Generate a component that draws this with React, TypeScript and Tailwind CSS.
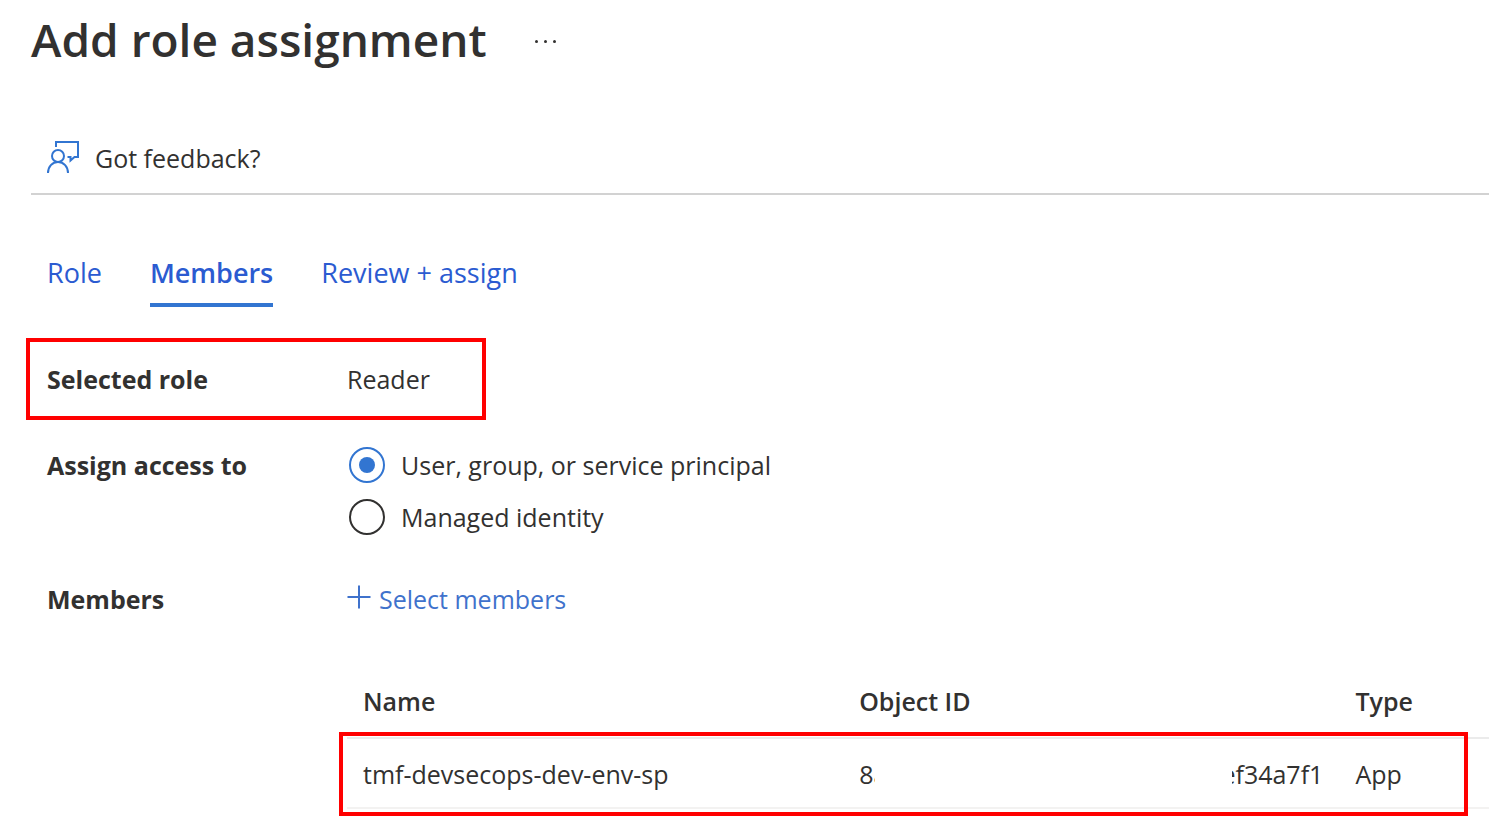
import { useState } from "react";

function FeedbackIcon() {
  return (
    <svg width="32" height="32" viewBox="0 0 32 32" fill="none" stroke="#3275d1" strokeWidth="2" className="shrink-0" aria-hidden="true">
      <path d="M9 6V1h22v15h-3.500l-4 3.500V16h-3" />
      <circle cx="11" cy="15" r="6" />
      <path d="M1 32c0-6.300 4.300-11 10-11s10 4.700 10 11" />
    </svg>
  );
}

function PlusIcon() {
  return (
    <svg width="24" height="24" viewBox="0 0 24 24" fill="none" stroke="#3f72cc" strokeWidth="2" className="shrink-0" aria-hidden="true">
      <path d="M0.500 12h23M12 0.500v23" />
    </svg>
  );
}

const tabs = ["Role", "Members", "Review + assign"];

const accessOptions = ["User, group, or service principal", "Managed identity"];

export default function App() {
  const [tab, setTab] = useState("Members");
  const [access, setAccess] = useState(accessOptions[0]);

  return (
    <main className="overflow-x-hidden bg-white pb-5 pl-[31px] font-['Open_Sans','Noto_Sans',sans-serif] text-[25px] leading-9 text-[#323130]">
      <header className="flex items-center gap-12 pt-[7px]">
        <h1 className="text-[46px] leading-16 font-semibold">Add role assignment</h1>
        <button type="button" aria-label="More actions" className="flex gap-1.5 pt-1">
          <span className="size-[3px] rounded-full bg-[#323130]" />
          <span className="size-[3px] rounded-full bg-[#323130]" />
          <span className="size-[3px] rounded-full bg-[#323130]" />
        </button>
      </header>

      <div className="mt-[69px] border-b-2 border-[#d2d2d2] pb-[17px] pl-4">
        <button type="button" className="flex items-center gap-4">
          <span className="pb-0.5">
            <FeedbackIcon />
          </span>
          Got feedback?
        </button>
      </div>

      <div className="pl-4">
        <div role="tablist" className="mt-[60px] flex gap-12 text-[27px] text-[#2b5bd1]">
          {tabs.map((name) => (
            <button
              key={name}
              type="button"
              role="tab"
              aria-selected={tab === name}
              onClick={() => setTab(name)}
              className={
                tab === name
                  ? "border-b-4 border-[#3275d1] pb-3 font-semibold"
                  : "border-b-4 border-transparent pb-3"
              }
            >
              {name}
            </button>
          ))}
        </div>

        <dl className="relative mt-[54px] grid w-fit grid-cols-[300px_auto]">
          <dt className="font-bold">Selected role</dt>
          <dd className="w-20">Reader</dd>
          <div className="pointer-events-none absolute -inset-y-[23px] -right-[59px] -left-[21px] border-4 border-[#ff0000]" />
        </dl>

        <div role="radiogroup" aria-labelledby="access-label" className="mt-[50px] grid grid-cols-[300px_1fr]">
          <span id="access-label" className="font-bold">Assign access to</span>
          <div className="flex flex-col items-start gap-4 pl-0.5">
            {accessOptions.map((option) => (
              <label key={option} className="flex items-center gap-4">
                <input
                  type="radio"
                  name="access"
                  checked={access === option}
                  onChange={() => setAccess(option)}
                  className="grid size-9 appearance-none place-items-center rounded-full border-2 border-[#323130] checked:border-[#3275d1] checked:before:size-4 checked:before:rounded-full checked:before:bg-[#3275d1]"
                />
                {option}
              </label>
            ))}
          </div>
        </div>

        <section className="mt-[46px] grid grid-cols-[300px_minmax(0,1fr)]">
          <h2 className="font-bold">Members</h2>
          <div>
            <button type="button" className="flex gap-2 text-[#3f72cc]">
              <span className="pt-1">
                <PlusIcon />
              </span>
              Select members
            </button>

            <div className="relative mt-[66px]">
              <table className="w-full table-fixed border-separate border-spacing-0 text-left">
                <colgroup>
                  <col className="w-[43.45%]" />
                  <col className="w-[43.45%]" />
                  <col />
                </colgroup>
                <thead>
                  <tr>
                    <th className="border-b-2 border-[#ebebeb] px-4 pb-[18px] font-semibold">Name</th>
                    <th className="border-b-2 border-[#ebebeb] px-4 pb-[18px] font-semibold">Object ID</th>
                    <th className="border-b-2 border-[#ebebeb] px-4 pb-[18px] font-semibold">Type</th>
                  </tr>
                </thead>
                <tbody>
                  <tr>
                    <td className="border-b-2 border-[#f3f2f1] px-4 pt-[17px] pb-[15px]">tmf-devsecops-dev-env-sp</td>
                    <td className="border-b-2 border-[#f3f2f1] px-4 pt-[17px] pb-[15px]">
                      <div className="flex justify-between">
                        <span className="w-4 overflow-hidden">8a</span>
                        <span className="flex w-[91px] justify-end overflow-hidden">ef34a7f1</span>
                      </div>
                    </td>
                    <td className="border-b-2 border-[#f3f2f1] px-4 pt-[17px] pb-[15px]">App</td>
                  </tr>
                </tbody>
              </table>
              <div className="pointer-events-none absolute top-[49px] right-[21px] -bottom-[7px] -left-2 border-4 border-[#ff0000]" />
            </div>
          </div>
        </section>
      </div>
    </main>
  );
}
